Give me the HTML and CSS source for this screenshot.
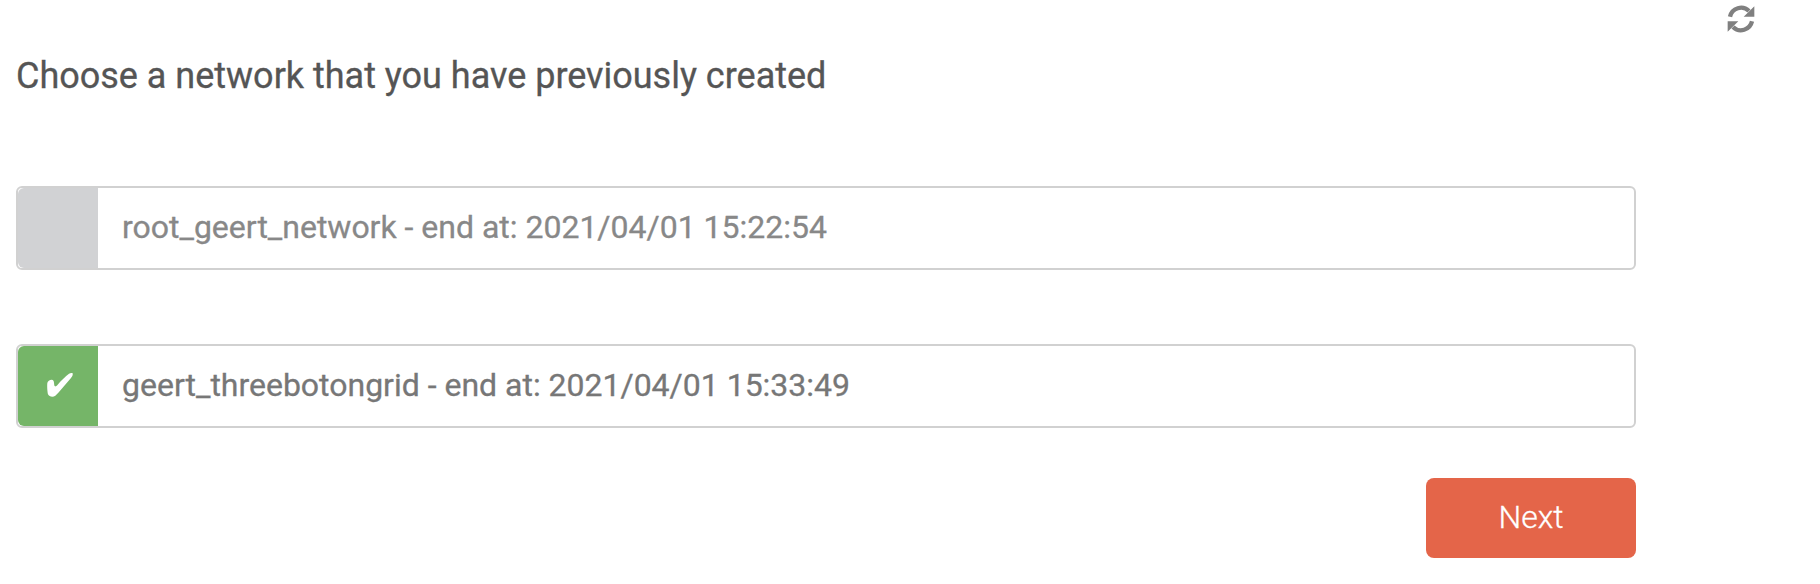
FILE: index.html
```
<!DOCTYPE html>
<html lang="en">
<head>
<meta charset="utf-8">
<title>Choose a network</title>
<link rel="stylesheet" href="styles.css">
</head>
<body>
<main class="page">
  <form class="form">
    <h1 class="title">Choose a network that you have previously created</h1>
    <div class="option">
      <span class="mark"></span>
      <span class="label">root_geert_network - end at: 2021/04/01 15:22:54</span>
    </div>
    <div class="option selected">
      <span class="mark"><svg class="check" viewBox="0 0 78 72"><path d="M1 30C2 24 8 20 14 20C19 20 21 24 21 30C22 34 21 38 24 40C26 41 29 38 32 35C43 22 55 10 66 2C70 0 75 0 77 1C78 6 76 11 72 15L34 59C28 66 22 71 16 71C10 71 5 69 3 64C1 56 0 38 1 30Z"/></svg></span>
      <span class="label">geert_threebotongrid - end at: 2021/04/01 15:33:49</span>
    </div>
    <button class="next" type="button">Next</button>
  </form>
  <svg class="refresh" viewBox="0 0 84 84">
    <path class="arc" d="M9 35A34 34 0 0 1 66 18M75 49A34 34 0 0 1 18 66"/>
    <path d="M82 4V35H50ZM2 80V49H34Z"/>
  </svg>
</main>
</body>
</html>
```
FILE: styles.css
```
* { box-sizing: border-box; }
body { margin: 0; background: #fff; font-family: Roboto, sans-serif; }
.page { display: flex; height: 584px; }
.form { width: 1620px; margin-left: 16px; padding-top: 52px; display: flex; flex-direction: column; }
.title { margin: 0 0 86px; height: 48px; line-height: 48px; font-size: 36px; font-weight: 400; color: #555; -webkit-text-stroke: 0.3px #555; letter-spacing: -0.01px; white-space: nowrap; }
.option { display: flex; height: 84px; margin-bottom: 74px; border: 2px solid #d1d1d1; border-radius: 6px; }
.option.selected { margin-bottom: 50px; }
.mark { width: 80px; background: #d1d2d4; border-radius: 6px 0 0 6px; display: flex; align-items: center; justify-content: center; }
.selected .mark { background: #75b568; padding: 0 0 2px 4px; }
.check { width: 26px; height: 24px; fill: #fff; }
.label { padding-left: 24px; line-height: 78px; font-size: 32px; letter-spacing: -0.01px; color: #888; -webkit-text-stroke: 0.3px #888; white-space: nowrap; }
.selected .label { color: #777; -webkit-text-stroke-color: #777; }
.next { align-self: flex-end; width: 210px; height: 80px; padding: 0 0 2px; border: 0; border-radius: 8px; background: #e46549; color: #fff; font: 300 32px Roboto, sans-serif; -webkit-text-stroke: 0.3px #fff; }
.refresh { width: 28px; height: 28px; margin: 4.500px 0 0 91px; fill: #808080; }
.arc { fill: none; stroke: #808080; stroke-width: 13; }
```
